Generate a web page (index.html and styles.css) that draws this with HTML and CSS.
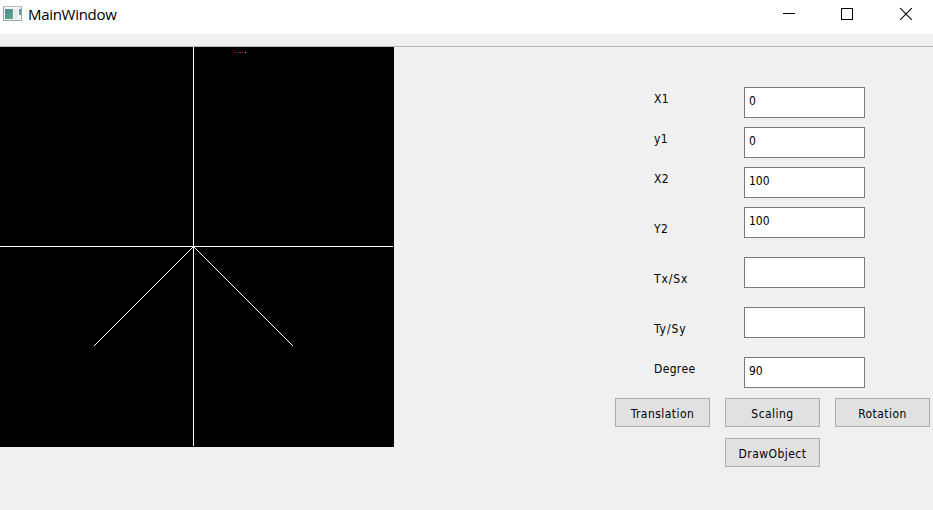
FILE: index.html
```html
<!DOCTYPE html>
<html lang="en">
<head>
<meta charset="utf-8">
<title>MainWindow</title>
<link rel="stylesheet" href="styles.css">
</head>
<body>
<header class="titlebar">
  <svg class="app-icon" width="19" height="16" viewBox="0 0 19 16">
    <defs>
      <linearGradient id="pane" x1="0" y1="0" x2="1" y2="1"><stop offset="0" stop-color="#4a85a8"/><stop offset="1" stop-color="#5fb078"/></linearGradient>
      <linearGradient id="strip" x1="0" y1="0" x2="0" y2="1"><stop offset="0" stop-color="#5086b0"/><stop offset="1" stop-color="#6bb585"/></linearGradient>
    </defs>
    <rect x=".5" y=".5" width="18" height="14" fill="#f4f5f6" stroke="#9ba3aa"/>
    <path d="M0 .5H19" stroke="#b5bcc2"/>
    <rect x="2" y="3" width="8" height="10" fill="url(#pane)"/>
    <rect x="11" y="3" width="4" height="10" fill="#e8eaeb"/>
    <rect x="16" y="3" width="2" height="6" fill="url(#strip)"/>
  </svg>
  <h1 class="title">MainWindow</h1>
  <svg class="window-controls" width="130" height="14" viewBox="0 0 130 14">
    <path d="M0 6.5H12" stroke="#000" shape-rendering="crispEdges"/>
    <rect x="58.5" y="1.5" width="11" height="11" fill="none" stroke="#000" shape-rendering="crispEdges"/>
    <path d="M117.2 1.2l11.6 11.6M128.8 1.2l-11.6 11.6" stroke="#000" stroke-width="1.1"/>
  </svg>
</header>
<div class="toolbar"></div>
<main class="content">
  <svg class="canvas" width="394" height="400" viewBox="0 0 394 400" shape-rendering="crispEdges">
    <rect width="394" height="400" fill="#000"/>
    <rect x="193" width="1" height="399" fill="#fff"/>
    <rect y="199" width="393" height="1" fill="#fff"/>
    <path d="M193.5 199.5l-99 99M193.5 199.5l99 99" stroke="#fff" stroke-linecap="square"/>
    <g>
      <rect x="234" y="5" width="1" height="1" fill="#f00"/>
      <rect x="236" y="5" width="1" height="1" fill="#00d"/>
      <rect x="237" y="5" width="1" height="1" fill="#505"/>
      <rect x="239" y="5" width="1" height="1" fill="#060"/>
      <rect x="240" y="5" width="1" height="1" fill="#e00"/>
      <rect x="242" y="5" width="1" height="1" fill="#70f"/>
      <rect x="245" y="5" width="1" height="1" fill="#8c2"/>
      <rect x="247" y="5" width="1" height="1" fill="#009"/>
    </g>
  </svg>
  <form class="panel">
    <div class="fields">
      <label class="row"><span class="name">X1</span><input class="field" value="0"></label>
      <label class="row"><span class="name">y1</span><input class="field" value="0"></label>
      <label class="row"><span class="name">X2</span><input class="field" value="100"></label>
      <label class="row tall"><span class="name low">Y2</span><input class="field" value="100"></label>
      <label class="row tall"><span class="name low wide">Tx/Sx</span><input class="field"></label>
      <label class="row tall"><span class="name low wide">Ty/Sy</span><input class="field"></label>
      <label class="row"><span class="name">Degree</span><input class="field" value="90"></label>
    </div>
    <div class="buttons">
      <button type="button" class="button">Translation</button>
      <button type="button" class="button">Scaling</button>
      <button type="button" class="button">Rotation</button>
      <button type="button" class="button draw">DrawObject</button>
    </div>
  </form>
</main>
</body>
</html>
```
FILE: styles.css
```css
* { box-sizing: border-box; }
body {
  margin: 0;
  height: 510px;
  overflow: hidden;
  background: #f0f0f0;
  color: #000;
  font: 12px/16px "DejaVu Sans Condensed", "DejaVu Sans", sans-serif;
}
.titlebar {
  display: flex;
  align-items: flex-start;
  height: 34px;
  padding: 6px 20px 0 3px;
  background: #fff;
}
.title {
  margin: -2px 0 0 6px;
  font: 15px/20px "Open Sans", sans-serif;
  letter-spacing: -.3px;
}
.window-controls { margin: 1px 0 0 auto; }
.toolbar {
  height: 13px;
  border-bottom: 1px solid #b7b7b7;
}
.content {
  display: flex;
  justify-content: space-between;
}
.canvas { display: block; }
.panel { width: 318px; padding-top: 40px; }
.fields { padding-left: 39px; }
.row {
  display: flex;
  height: 40px;
}
.row.tall { height: 50px; }
.name { width: 90px; padding-top: 4px; letter-spacing: .35px; }
.name.low { padding-top: 14px; }
.name.wide { letter-spacing: .9px; }
.field {
  width: 121px;
  height: 31px;
  padding: 0 4px 3px;
  border: 1px solid #7a7a7a;
  border-radius: 0;
  background: #fff;
  color: #000;
  font: inherit;
  outline: 0;
}
.buttons {
  display: grid;
  grid-template-columns: repeat(3, 95px);
  gap: 11px 15px;
  margin-top: 1px;
}
.button {
  height: 29px;
  padding: 2px 0 0;
  border: 1px solid #adadad;
  background: #e1e1e1;
  color: #000;
  font: inherit;
  letter-spacing: .45px;
}
.draw { grid-column: 2; }
```
